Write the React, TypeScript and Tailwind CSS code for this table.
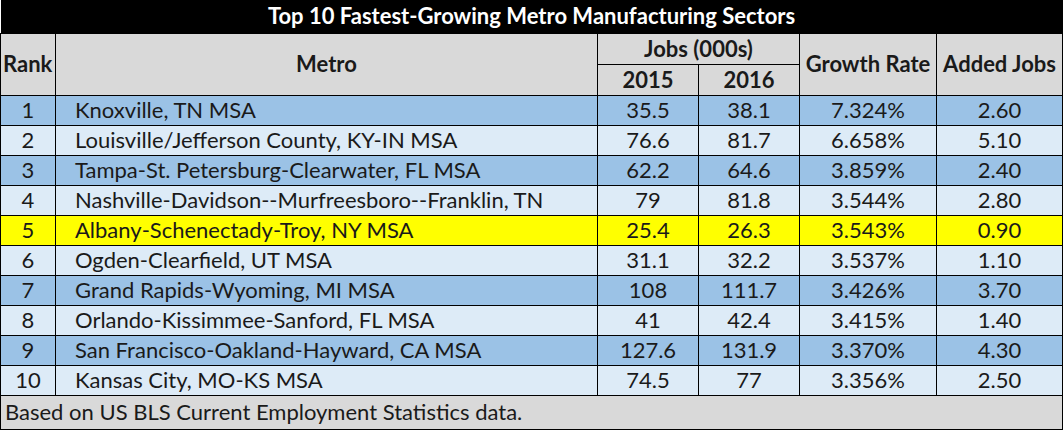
import React from "react";

type Row = {
  rank: number;
  metro: string;
  y2015: string;
  y2016: string;
  growth: string;
  added: string;
};

const rows: Row[] = [
  { rank: 1, metro: "Knoxville, TN MSA", y2015: "35.5", y2016: "38.1", growth: "7.324%", added: "2.60" },
  { rank: 2, metro: "Louisville/Jefferson County, KY-IN MSA", y2015: "76.6", y2016: "81.7", growth: "6.658%", added: "5.10" },
  { rank: 3, metro: "Tampa-St. Petersburg-Clearwater, FL MSA", y2015: "62.2", y2016: "64.6", growth: "3.859%", added: "2.40" },
  { rank: 4, metro: "Nashville-Davidson--Murfreesboro--Franklin, TN", y2015: "79", y2016: "81.8", growth: "3.544%", added: "2.80" },
  { rank: 5, metro: "Albany-Schenectady-Troy, NY MSA", y2015: "25.4", y2016: "26.3", growth: "3.543%", added: "0.90" },
  { rank: 6, metro: "Ogden-Clearfield, UT MSA", y2015: "31.1", y2016: "32.2", growth: "3.537%", added: "1.10" },
  { rank: 7, metro: "Grand Rapids-Wyoming, MI MSA", y2015: "108", y2016: "111.7", growth: "3.426%", added: "3.70" },
  { rank: 8, metro: "Orlando-Kissimmee-Sanford, FL MSA", y2015: "41", y2016: "42.4", growth: "3.415%", added: "1.40" },
  { rank: 9, metro: "San Francisco-Oakland-Hayward, CA MSA", y2015: "127.6", y2016: "131.9", growth: "3.370%", added: "4.30" },
  { rank: 10, metro: "Kansas City, MO-KS MSA", y2015: "74.5", y2016: "77", growth: "3.356%", added: "2.50" },
];

// alternating Excel-ish banding, rank 5 highlighted
const rowBg = (r: Row) => {
  if (r.rank === 5) return "bg-[#ffff00]";
  return r.rank % 2 === 1 ? "bg-[#9bc2e6]" : "bg-[#ddebf7]";
};

export default function App() {
  return (
    <div className="w-[1063px] h-[431px] bg-white font-['Lato','Liberation_Sans',sans-serif] text-[22px] leading-none text-[#1a1a1a]">
      <table className="table-fixed border-collapse w-[1062px]">
        <colgroup>
          <col className="w-[55px]" />
          <col className="w-[542px]" />
          <col className="w-[101px]" />
          <col className="w-[101px]" />
          <col className="w-[137px]" />
          <col className="w-[126px]" />
        </colgroup>
        <thead>
          <tr>
            <th colSpan={6} className="h-[33px] bg-black text-white font-bold text-center p-0">
              Top 10 Fastest-Growing Metro Manufacturing Sectors
            </th>
          </tr>
          <tr className="bg-[#d9d9d9] font-bold">
            <th rowSpan={2} className="border border-black p-0 pl-[2px] text-left whitespace-nowrap">Rank</th>
            <th rowSpan={2} className="border border-black p-0">Metro</th>
            <th colSpan={2} className="border border-black p-0 h-[31px]">Jobs (000s)</th>
            <th rowSpan={2} className="border border-black p-0 whitespace-nowrap">Growth Rate</th>
            <th rowSpan={2} className="border border-black p-0 whitespace-nowrap">Added Jobs</th>
          </tr>
          <tr className="bg-[#d9d9d9] font-bold">
            <th className="border border-black p-0 h-[31px]">2015</th>
            <th className="border border-black p-0">2016</th>
          </tr>
        </thead>
        <tbody>
          {rows.map((r) => (
            <tr key={r.rank} className={rowBg(r)}>
              <td className="border border-black p-0 h-[30px] text-center">{r.rank}</td>
              <td className="border border-black p-0 pl-[19px] whitespace-nowrap">{r.metro}</td>
              <td className="border border-black p-0 text-center">{r.y2015}</td>
              <td className="border border-black p-0 text-center">{r.y2016}</td>
              <td className="border border-black p-0 text-center">{r.growth}</td>
              <td className="border border-black p-0 text-center">{r.added}</td>
            </tr>
          ))}
          <tr className="bg-[#d9d9d9]">
            <td colSpan={6} className="border border-black p-0 pl-[4px] h-[34px]">
              Based on US BLS Current Employment Statistics data.
            </td>
          </tr>
        </tbody>
      </table>
    </div>
  );
}
